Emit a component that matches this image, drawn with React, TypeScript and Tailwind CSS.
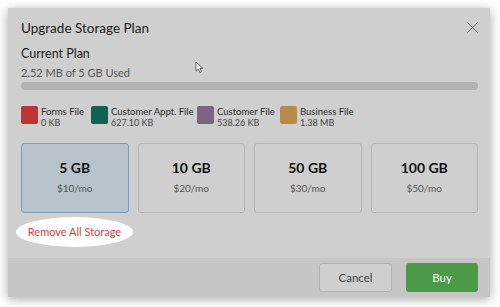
import { X } from "lucide-react";

const legend = [
  { label: "Forms File", size: "0 KB", color: "bg-[#bf3434]", w: "w-[70px]" },
  { label: "Customer Appt. File", size: "627.10 KB", color: "bg-[#13624f]", w: "w-[106px]" },
  { label: "Customer File", size: "538.26 KB", color: "bg-[#7a6680]", w: "w-[83px]" },
  { label: "Business File", size: "1.38 MB", color: "bg-[#b88c47]", w: "w-auto" },
];

const plans = [
  { size: "5 GB", price: "$10/mo", active: true },
  { size: "10 GB", price: "$20/mo" },
  { size: "50 GB", price: "$30/mo" },
  { size: "100 GB", price: "$50/mo" },
];

export default function App() {
  return (
    <div
      className="w-[500px] h-[307px] bg-white pl-[8px] pt-[8px]"
      style={{ fontFamily: "Lato, 'Open Sans', sans-serif" }}
    >
      <div className="relative w-[482px] h-[289px] bg-[#cfcfcf] shadow-[0_2px_10px_rgba(0,0,0,0.35)] flex flex-col">
        <div className="flex-1 px-[13px] pt-[10px]">
          <div className="flex items-center justify-between h-[20px]">
            <h1 className="text-[13.5px] text-[#1a1a1a] leading-[20px]">Upgrade Storage Plan</h1>
            <X className="w-[19px] h-[19px] text-[#555] mr-[-5px] mt-[-2px]" strokeWidth={1.1} />
          </div>
          <div className="mt-[7px] text-[12.5px] text-[#1a1a1a] leading-[17px]">Current Plan</div>
          <div className="mt-[3px] text-[11px] text-[#555] leading-[16px]">2.52 MB of 5 GB Used</div>
          <div className="mt-[1px] h-[8px] w-[457px] rounded-full bg-[#b3b3b3]" />
          <div className="mt-[16px] flex">
            {legend.map((l) => (
              <div key={l.label} className={`flex items-start gap-[3px] ${l.w}`}>
                <div className={`w-[17px] h-[18px] shrink-0 rounded-[2px] ${l.color}`} />
                <div className="leading-[10px] whitespace-nowrap pt-[1px]">
                  <div className="text-[9.5px] text-[#2a2a2a]">{l.label}</div>
                  <div className="text-[9px] text-[#444] mt-[1px]">{l.size}</div>
                </div>
              </div>
            ))}
          </div>
          <div className="mt-[15px] flex gap-[9px] w-[457px]">
            {plans.map((p) => (
              <div
                key={p.size}
                className={`flex-1 h-[70px] rounded-[3px] border flex flex-col items-center justify-center ${
                  p.active ? "bg-[#b8c2ca] border-[#7b9dba]" : "bg-[#cfcfcf] border-[#b6b6b6]"
                }`}
              >
                <div className="text-[14px] font-bold text-[#111] leading-[18px] mt-[-2px]">{p.size}</div>
                <div className="text-[10px] text-[#555] mt-[4px] leading-[14px]">{p.price}</div>
              </div>
            ))}
          </div>
          <div className="mt-[4px] ml-[-5px] w-[117px] h-[30px] rounded-[50%] bg-white flex items-center justify-center">
            <span className="text-[11px] text-[#d0433c]">Remove All Storage</span>
          </div>
        </div>
        <div className="h-[39px] bg-[#c6c6c6] flex items-center justify-end gap-[14px] pr-[12px]">
          <button className="w-[73px] h-[29px] rounded-[3px] border border-[#b3b3b3] bg-[#cfcfcf] text-[11.5px] text-[#444]">
            Cancel
          </button>
          <button className="w-[72px] h-[29px] rounded-[3px] bg-[#4a9a47] text-[11.5px] text-white">
            Buy
          </button>
        </div>
        <svg className="absolute left-[187px] top-[53px]" width="10" height="13" viewBox="0 0 10 13">
          <path d="M1 1 L1 10 L3.3 8 L5 11.5 L6.5 10.8 L4.9 7.5 L8 7.5 Z" fill="#fff" stroke="#444" strokeWidth="0.8" />
        </svg>
      </div>
    </div>
  );
}
